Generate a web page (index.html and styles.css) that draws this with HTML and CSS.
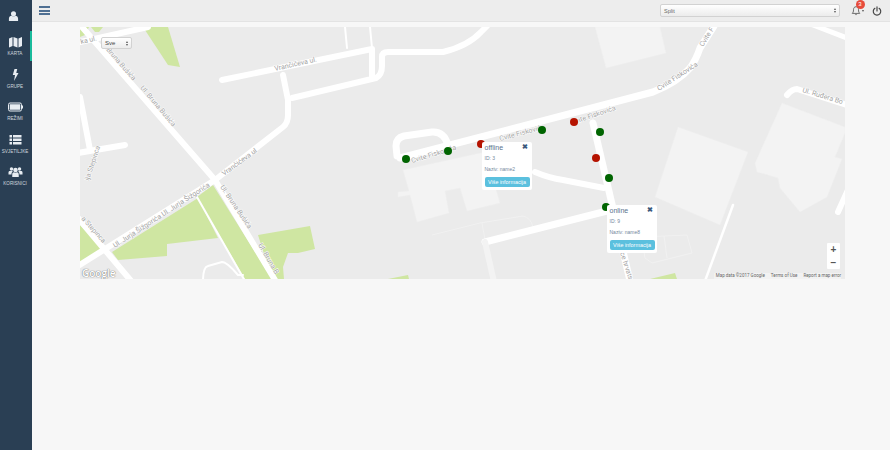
FILE: index.html
```html
<!DOCTYPE html>
<html lang="en">
<head>
    <meta charset="UTF-8">
    <title>Karta</title>
    <link rel="stylesheet" href="styles.css">
</head>
<body>

<aside class="sidebar">
    <div class="profile">
        <svg class="profile-icon" viewBox="0 0 24 24"><circle cx="12" cy="7" r="5.5"/><path d="M2 23v-5c0-4 2.500-6.500 6-6.500 2 1.600 6 1.600 8 0 3.500 0 6 2.500 6 6.500v5z"/></svg>
    </div>
    <nav class="nav">
        <a class="nav-item active" href="#">
            <svg class="nav-icon" viewBox="0 0 28 24"><path d="M1 5l7-3v18l-7 3zM10 2l8 3v18l-8-3zM20 5l7-3v18l-7 3z"/></svg>
            KARTA
        </a>
        <a class="nav-item" href="#">
            <svg class="nav-icon" viewBox="0 0 24 24"><path d="M10 0h5.500l-2 8h4.500L9 24l2-12H6.500z"/></svg>
            GRUPE
        </a>
        <a class="nav-item" href="#">
            <svg class="nav-icon" viewBox="0 0 30 24"><rect x="1" y="4" width="26" height="16" rx="3" fill="none" stroke="#e8edf2" stroke-width="2"/><rect x="3.500" y="6.500" width="21" height="11" fill="#e8edf2"/><rect x="28" y="9" width="2" height="6"/></svg>
            REŽIMI
        </a>
        <a class="nav-item" href="#">
            <svg class="nav-icon" viewBox="0 0 28 24"><path d="M2 2h5v5H2zM9 2h17v5H9zM2 9h5v5H2zM9 9h17v5H9zM2 16h5v5H2zM9 16h17v5H9z"/></svg>
            SVJETILJKE
        </a>
        <a class="nav-item" href="#">
            <svg class="nav-icon" viewBox="0 0 28 24"><circle cx="6" cy="6" r="3.500"/><circle cx="22" cy="6" r="3.500"/><circle cx="14" cy="8" r="4.500"/><path d="M0 17v-4c0-2 1-3 3-3h4c1 0 1.500 1 1.500 1C6.500 12 6 14 6 17zM28 17v-4c0-2-1-3-3-3h-4c-1 0-1.500 1-1.500 1 2 1 2.500 3 2.500 6zM7.500 22v-5c0-3 1.500-4.500 3.500-4.500 2 1.200 4 1.200 6 0 2 0 3.500 1.500 3.500 4.500v5z"/></svg>
            KORISNICI
        </a>
    </nav>
</aside>

<div class="main">
    <header class="topbar">
        <div class="burger"><span></span><span></span><span></span></div>
        <div class="select select-city">
            Split
            <span class="arrows"></span>
        </div>
        <div class="bell">
            <svg class="bell-icon" viewBox="0 0 24 24"><path d="M12 3c-4 0-6 3-6 7 0 5-1 7-3 9h18c-2-2-3-4-3-9 0-4-2-7-6-7zM10 21c.5 1.500 3.500 1.500 4 0" fill="none" stroke="#555" stroke-width="2"/></svg>
            <span class="caret"></span>
            <span class="badge">3</span>
        </div>
        <svg class="power-icon" viewBox="0 0 24 24"><path d="M7 5.500a9 9 0 1 0 10 0M12 2v10" fill="none" stroke="#444" stroke-width="2.800" stroke-linecap="round"/></svg>
    </header>

    <div class="map">
        <svg class="map-canvas" viewBox="80 27 765 252">
            <rect x="80" y="27" width="765" height="252" fill="#ebebeb"/>

            <!-- parks -->
            <g fill="#cfe6a2">
                <path d="M143 27h25l12 40-12-2z"/>
                <path d="M80 27h9l-4 8-5 2zM91 27h12l-4 5h-4z"/>
                <path d="M112 252l86-54 20 40-51 6v12l-49 4z"/>
                <path d="M213 185l59 94h-27l-48-82z"/>
                <path d="M258 235l52-9 5 23-17 4-10 0-5 14 1 12h-12z"/>
                <path d="M80 225l22 23-22 17z"/>
                <path d="M388 279l20-4 1 4zM650 279l25-6 2 6z"/>
            </g>

            <!-- buildings -->
            <g fill="#f3f3f3" stroke="#eeeeee" stroke-width="0.500">
                <path d="M595 27h65l6 26-60 15z"/>
                <path d="M678 127l70 25-28 73-65-28z"/>
                <path d="M782 103l63 24v6l-10 24 7 2-15 38-27 15-20-24-2-10-10-3-11-3-2-9z"/>
                <path d="M403 170l82-18 15 51-33 8-7-23-15 3 4 22-32 9-7-27-12 2v-5l11-1z"/>
            </g>
            <g fill="none" stroke="#f1f1f1" stroke-width="1">
                <path d="M432 235l48-12 43-7q8 2 10 11M482 223l3 17"/>
                <path d="M645 258l-3-21 45-2 5 18-40 10zM664 236l3 22"/>
            </g>

            <!-- roads -->
            <g fill="none" stroke="#fff" stroke-linecap="round" stroke-linejoin="round">
                <path stroke-width="6" d="M82 27l133 153 60 100"/>
                <path stroke-width="6" d="M78 266l137-86 68-53q5-4 5-12v-15l-5-25"/>
                <path stroke-width="6" d="M222 80l150-31M372 49v28M292 98l84-20q6-3 6-12v-9q0-5 6-5h55q25-6 38-20l6-6"/>
                <path stroke-width="6" d="M80 42l68-15"/>
                <path stroke-width="2" d="M345 27l2 21M370 27l2 21"/>
                <path stroke-width="6" d="M80 97l10 53M78 153l47-8"/>
                <path stroke-width="6" d="M78 218l27 32 27 32"/>
                <path stroke-width="2" d="M197 197l48 84"/>
                <path stroke-width="2" d="M203 281q0-14 5-15l14-4q5 0 16 13h5"/>
                <path stroke-width="7" d="M400 158l253-66q25-10 37-24 6-8 10-20l14-22"/>
                <path stroke-width="7" d="M397 156l-1-10q0-8 8-10l28-4q12-1 16 13"/>
                <path stroke-width="7" d="M593 123l37 158"/>
                <path stroke-width="7" d="M485 242l122-31"/>
                <path stroke-width="6" d="M535 172q14 6 28 8l41 8"/>
                <path stroke-width="6" stroke="#f3f3f3" d="M485 242l9 40"/>
                <path stroke-width="2.500" d="M733 205l-28 76"/>
                <path stroke-width="5" d="M813 25l34 13"/>
                <path stroke-width="6" d="M787 95q5-6 10-6l50 16"/>
                <path stroke-width="6" d="M838 212l10-22"/>
            </g>

            <!-- street names -->
            <g class="street">
                <text transform="translate(81 44) rotate(-13)">ka ul.</text>
                <text transform="translate(275 71) rotate(-13)">Vrančićeva ul.</text>
                <text transform="translate(106 50) rotate(49)">Bruna Bušića</text>
                <text transform="translate(140 88) rotate(50)">Ul. Bruna Bušića</text>
                <text transform="translate(224 176) rotate(-36)">Vrančićeva ul</text>
                <text transform="translate(115 248) rotate(-33)">Ul. Jurja Šižgorića Ul. Jurja Šižgorića</text>
                <text transform="translate(220 187) rotate(56)">Ul. Bruna Bušića</text>
                <text transform="translate(258 245) rotate(60)">Ul. Bruna B</text>
                <text transform="translate(89 181) rotate(-72)">ija Stepinca</text>
                <text transform="translate(81 219) rotate(48)">a Stepinca</text>
                <text transform="translate(412 163) rotate(-17)">Cvite Fiskovića</text>
                <text transform="translate(500 141) rotate(-15)">Cvite Fiskovića</text>
                <text transform="translate(572 125) rotate(-19)">Cvite Fiskovića</text>
                <text transform="translate(659 91) rotate(-33)">Cvite Fiskovića</text>
                <text transform="translate(703 47) rotate(-58)">Cvite F</text>
                <text transform="translate(802 92) rotate(17)">Ul. Ruđera Bo</text>
                <text transform="translate(620 253) rotate(72)">ce hrvats</text>
            </g>

            <!-- lamps -->
            <g fill="#006400">
                <circle cx="406" cy="159" r="4"/>
                <circle cx="448" cy="151" r="4"/>
                <circle cx="542" cy="130" r="4"/>
                <circle cx="600" cy="132" r="4"/>
                <circle cx="609" cy="178" r="4"/>
                <circle cx="606" cy="207" r="4"/>
            </g>
            <g fill="#b51300">
                <circle cx="481" cy="144" r="4"/>
                <circle cx="574" cy="122" r="4"/>
                <circle cx="596" cy="158" r="4"/>
            </g>
        </svg>

        <div class="select select-filter">
            Sve
            <span class="arrows"></span>
        </div>

        <div class="popup popup-offline">
            <div class="popup-head"><span>offline</span><b class="popup-close">✖</b></div>
            <p>ID: 3</p>
            <p>Naziv: name2</p>
            <a class="popup-btn" href="#">Više informacija</a>
        </div>

        <div class="popup popup-online">
            <div class="popup-head"><span>online</span><b class="popup-close">✖</b></div>
            <p>ID: 9</p>
            <p>Naziv: name8</p>
            <a class="popup-btn" href="#">Više informacija</a>
        </div>

        <div class="google">Google</div>
        <div class="attribution">
            <span>Map data ©2017 Google</span>
            <span>Terms of Use</span>
            <span>Report a map error</span>
        </div>
        <div class="zoom">
            <span>+</span>
            <span>−</span>
        </div>
    </div>
</div>

</body>
</html>
```

FILE: styles.css
```css
body {
    margin: 0;
    width: 890px;
    height: 450px;
    display: flex;
    overflow: hidden;
    background-color: #f7f7f7;
    font-family: "Liberation Sans", Arial, sans-serif;
}

/* Sidebar */
.sidebar {
    width: 32px;
    flex-shrink: 0;
    background-color: #2a3f54;
}

.profile {
    height: 31px;
    padding-left: 8px;
    display: flex;
    align-items: center;
    box-sizing: border-box;
}

.profile-icon {
    width: 11px;
    height: 12px;
    fill: #e8edf2;
}

.nav {
    display: flex;
    flex-direction: column;
    gap: 2.5px;
}

.nav-item {
    height: 30px;
    box-sizing: border-box;
    border-right: 2px solid transparent;
    display: flex;
    flex-direction: column;
    align-items: center;
    justify-content: flex-end;
    gap: 3px;
    padding-bottom: 5px;
    color: #cfd7df;
    font-size: 4.6px;
    text-decoration: none;
    white-space: nowrap;
}

.nav-item.active {
    border-right-color: #1abb9c;
}

.nav-icon {
    height: 12px;
    width: 15px;
    fill: #e8edf2;
}

/* Top bar */
.main {
    flex: 1;
    min-width: 0;
}

.topbar {
    height: 21px;
    display: flex;
    align-items: center;
    background-color: #ededed;
    border-bottom: 1px solid #e3e3e3;
}

.burger {
    width: 11px;
    margin-left: 7px;
    display: flex;
    flex-direction: column;
    gap: 1.5px;
}

.burger span {
    height: 2px;
    background-color: #4f6f92;
}

.select {
    display: flex;
    align-items: center;
    justify-content: space-between;
    box-sizing: border-box;
    padding: 0 3px;
    background: linear-gradient(to bottom, #fff, #ececec);
    border: 1px solid #d2d2d2;
    border-radius: 2px;
    color: #666;
    font-size: 5.5px;
}

.select-city {
    width: 180px;
    height: 13px;
    margin-left: auto;
}

.select-filter {
    position: absolute;
    left: 21px;
    top: 10px;
    width: 31px;
    height: 12px;
    color: #444;
    font-size: 6px;
}

.arrows {
    display: flex;
    flex-direction: column;
    gap: 1px;
}

.arrows::before,
.arrows::after {
    content: "";
    border-left: 1.2px solid transparent;
    border-right: 1.2px solid transparent;
}

.arrows::before {
    border-bottom: 2px solid #555;
}

.arrows::after {
    border-top: 2px solid #555;
}

.bell {
    position: relative;
    width: 12px;
    height: 12px;
    margin-left: 11px;
}

.bell-icon {
    display: block;
    width: 10px;
    height: 11px;
}

.caret {
    position: absolute;
    right: -1px;
    top: 5px;
    border-left: 1.5px solid transparent;
    border-right: 1.5px solid transparent;
    border-top: 2px solid #555;
}

.badge {
    position: absolute;
    left: 4.5px;
    top: -4.5px;
    width: 9px;
    height: 9px;
    border-radius: 50%;
    background-color: #e74c3c;
    color: #fff;
    font-size: 6px;
    line-height: 9px;
    text-align: center;
}

.power-icon {
    display: block;
    width: 10px;
    height: 10px;
    margin: 0 8px 0 9px;
}

/* Map */
.map {
    position: relative;
    width: 765px;
    height: 252px;
    margin: 5px 0 0 48px;
    overflow: hidden;
}

.map-canvas {
    display: block;
    width: 765px;
    height: 252px;
}

.street text {
    font-family: Roboto, sans-serif;
    font-size: 7px;
    fill: #a3a3a3;
    stroke: #fff;
    stroke-width: 1px;
    paint-order: stroke;
}

.popup {
    position: absolute;
    width: 50px;
    box-sizing: border-box;
    padding: 0 2.5px 3px;
    background-color: #fff;
    border-radius: 2px;
    color: #73879c;
    font-size: 5px;
}

.popup-offline {
    left: 402px;
    top: 115px;
}

.popup-online {
    left: 527px;
    top: 178px;
}

.popup-head {
    display: flex;
    justify-content: space-between;
    align-items: center;
    height: 10px;
    font-size: 7px;
    color: #5a738e;
}

.popup-close {
    margin-right: 1.5px;
    font-size: 7px;
    color: #3d5a7d;
}

.popup p {
    margin: 0;
    height: 11px;
    line-height: 11px;
}

.popup p:first-of-type {
    margin-top: 1px;
}

.popup-btn {
    display: block;
    margin-top: 2px;
    height: 10px;
    line-height: 10px;
    border-radius: 2px;
    background-color: #5bc0de;
    color: #fff;
    font-size: 5.4px;
    text-align: center;
    text-decoration: none;
}

.google {
    position: absolute;
    left: 2px;
    bottom: -1px;
    font-family: "Open Sans", sans-serif;
    font-size: 10px;
    font-weight: 600;
    color: #fff;
    text-shadow: 0 0 1px #777, 0 0 1px #777;
}

.attribution {
    position: absolute;
    right: 4px;
    bottom: 0;
    padding: 0 0 0 2px;
    display: flex;
    gap: 6px;
    height: 6px;
    line-height: 6px;
    font-family: Roboto, sans-serif;
    font-size: 4.5px;
    color: #666;
    background-color: rgba(245, 245, 245, 0.7);
}

.zoom {
    position: absolute;
    left: 747px;
    top: 216px;
    width: 13px;
    height: 26px;
    display: flex;
    flex-direction: column;
    background-color: #fff;
    border-radius: 1px;
    color: #555;
    font-size: 10px;
    font-weight: bold;
    line-height: 13px;
    text-align: center;
}

.zoom span {
    height: 13px;
}
```
